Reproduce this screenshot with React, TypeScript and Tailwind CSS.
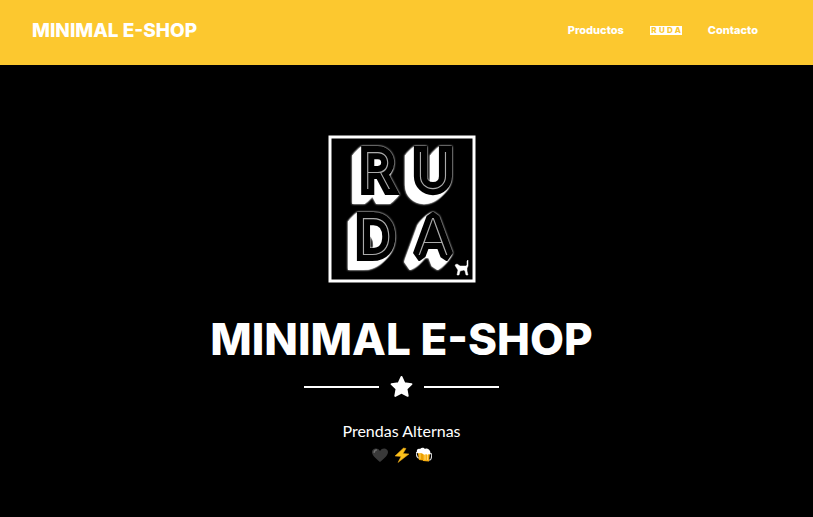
function Logo() {
  return (
    <svg className="h-[148px] w-[148px]" viewBox="0 0 148 148" role="img" aria-label="RUDA">
      <rect x="2" y="2" width="144" height="144" fill="#000" stroke="#fff" strokeWidth="3" />
      <g
        className="font-['Inter',sans-serif] text-[50px] font-thin [filter:drop-shadow(0_0_1px_#fff)_drop-shadow(-1px_1px_0_#fff)_drop-shadow(-2px_2px_0_#fff)_drop-shadow(-4px_4px_0_#fff)_drop-shadow(-2px_2px_0_#fff)] [paint-order:stroke]"
        textAnchor="middle"
        fill="#aaa"
        stroke="#000"
        strokeWidth="12"
      >
        <text x="49" y="54">R</text>
        <text x="105" y="54">U</text>
        <text x="47" y="120">D</text>
        <text x="105" y="120" strokeLinejoin="bevel">A</text>
      </g>
      <path
        d="M127 130l2-1 3 2h6l1-1v-4l1-1v6l-1 2v3l1 4h-2l-1-4-1-1-4 1-1 4h-2l1-5-2-3z"
        fill="#fff"
        stroke="#fff"
        strokeWidth=".5"
      />
    </svg>
  );
}

function Heart() {
  return (
    <svg className="h-4 w-4" viewBox="0 0 16 16" role="img" aria-label="Corazón negro">
      <path d="M8 15C6 13 0 9 0 5c0-4 6-5 8-1 2-4 8-3 8 1 0 4-6 8-8 10z" fill="#393939" />
      <path d="M2 6c-.5-2 1-4 3-3-2 0-2 2-3 3z" fill="#777" stroke="#777" strokeWidth=".6" />
    </svg>
  );
}

function Bolt() {
  return (
    <svg className="h-4 w-4" viewBox="0 0 16 16" role="img" aria-label="Rayo">
      <path d="M9.500 1L1 9l6 .5L4 15.500 15 7l-6-.5 3-5z" fill="#fcc21b" stroke="#e9a318" strokeWidth=".5" />
    </svg>
  );
}

function Beers() {
  return (
    <svg className="h-4 w-4" viewBox="0 0 16 16" role="img" aria-label="Cervezas">
      <path d="M2 5C0 5 0 6 .5 8s1 3 2.500 3M13 7c3-1 3 0 2.500 3s-1 3-3 3" fill="none" stroke="#ddd" strokeWidth="1.200" />
      <path d="M1.500 4l6 .5v9L3 13z" fill="#eba000" />
      <path d="M7 5h7l-1 9.500L7 14z" fill="#f8ae12" />
      <path d="M4 6v6M9 7v6M11.500 7v6" stroke="#ffd76b" strokeWidth="1" />
      <path d="M1 5C0 2 3 1 4 2c2-2 4-1 5 0 2-1 4 0 5 2 1 2 0 4-1 3-1 1-2 1-3 0-1 1-2 1-3 0-1-1-2-1-3-1S1 7 1 5z" fill="#fff" />
    </svg>
  );
}

export default function App() {
  return (
    <div className="min-h-screen bg-black font-['Inter',sans-serif] text-white [font-optical-sizing:none]">
      <header className="flex items-start justify-between bg-[#fcc82f] pt-4 pr-[55px] pb-[19px] pl-8">
        <a href="#inicio" className="text-[19px] leading-[30px] font-extrabold whitespace-nowrap">
          MINIMAL E-SHOP
        </a>
        <nav className="flex items-center gap-[26px] text-[11px] leading-7 font-extrabold">
          <a href="#productos">Productos</a>
          <a href="#ruda" aria-label="RUDA" className="flex text-[8px] leading-[9px] text-[#fcc82f]">
            {["R", "U", "D", "A"].map((c) => (
              <span key={c} className="w-2 bg-white text-center">
                {c}
              </span>
            ))}
          </a>
          <a href="#contacto">Contacto</a>
        </nav>
      </header>
      <main className="flex flex-col items-center pt-[70px] pr-[10px] pb-12">
        <Logo />
        <h1 className="mt-8 text-center text-[44px] leading-[48px] font-extrabold">MINIMAL E-SHOP</h1>
        <div className="mt-3 flex items-center gap-[11px]">
          <span className="h-[2px] w-[75px] bg-white" />
          <svg className="h-6 w-[23px]" viewBox="0 0 24 24" aria-hidden="true">
            <path
              d="M12 1.500L15 8l7.400 1-5.200 5 1.300 7.300L12 18l-6.500 3.300L6.800 14 1.600 9 9 8z"
              fill="#fff"
              stroke="#fff"
              strokeWidth="2"
              strokeLinejoin="round"
            />
          </svg>
          <span className="h-[2px] w-[75px] bg-white" />
        </div>
        <p className="mt-5 font-['Lato',sans-serif] text-[16px] leading-6">Prendas Alternas</p>
        <div className="flex h-6 items-center gap-[6px]">
          <Heart />
          <Bolt />
          <Beers />
        </div>
      </main>
    </div>
  );
}
